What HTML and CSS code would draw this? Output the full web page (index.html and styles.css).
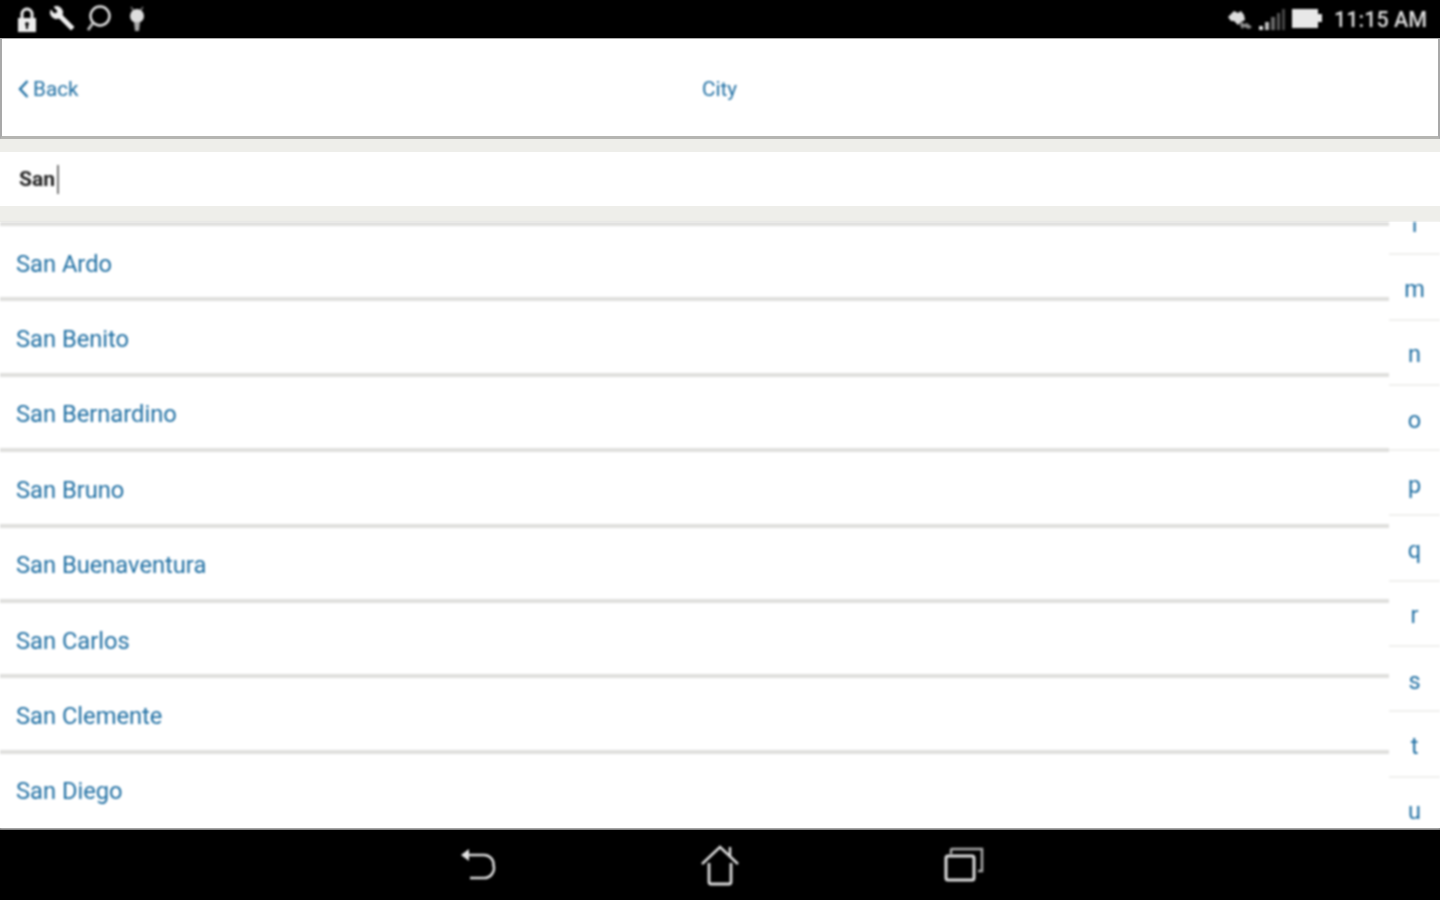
FILE: index.html
```html
<!DOCTYPE html>
<html lang="en">
<head>
    <meta charset="UTF-8">
    <meta name="viewport" content="width=device-width, initial-scale=1.0">
    <title>City</title>
    <link rel="stylesheet" href="styles.css">
</head>
<body>
    <div class="status-bar">
        <div class="status-icons">
            <svg class="icon" width="24" height="28" viewBox="0 0 24 28">
                <path d="M7 13V9a5 5 0 0 1 10 0v4" fill="none" stroke="#eee" stroke-width="3"/>
                <path d="M3 13h18v14H3z M12 17a2 2 0 0 0-1 3.700V24h2v-3.300A2 2 0 0 0 12 17z" fill="#eee" fill-rule="evenodd"/>
            </svg>
            <svg class="icon" width="28" height="28" viewBox="0 0 28 28">
                <path d="M3 5a6 6 0 0 0 8 8l12 12 3-3-12-12A6 6 0 0 0 6 2l4 4-2 3-3-1z" fill="#eee" stroke="#eee"/>
            </svg>
            <svg class="icon" width="28" height="30" viewBox="0 0 28 30">
                <circle cx="15" cy="12" r="9.500" fill="none" stroke="#e4e4e4" stroke-width="2.500"/>
                <path d="M8 19l-5 7" fill="none" stroke="#bbb" stroke-width="3"/>
            </svg>
            <svg class="icon robot" width="22" height="28" viewBox="0 0 20 28">
                <path d="M4 2l3 4M16 2l-3 4" stroke="#777" stroke-width="1.500"/>
                <circle cx="10" cy="11" r="7" fill="#ddd"/>
                <path d="M7 17h6l-1 9H8z" fill="#aaa"/>
            </svg>
        </div>
        <div class="status-right">
            <svg width="26" height="24" viewBox="0 0 26 24">
                <path d="M1 10l6-6 4 2 3-2 3 4 1 5-4 2-3 3-4-4H4z" fill="#ddd"/>
                <path d="M14 14l3 3 3-1 5 4-3 2-5-2-2 2-2-4z" fill="#8a8a8a"/>
            </svg>
            <svg width="29" height="24" viewBox="0 0 29 24">
                <path d="M1 19h4v4H1z" fill="#ddd"/>
                <path d="M7 15h4v8H7z" fill="#bbb"/>
                <path d="M13 10h4v13h-4z" fill="#666"/>
                <path d="M19 6h3v17h-3z" fill="#555"/>
                <path d="M24 2h3v21h-3z" fill="#444"/>
            </svg>
            <svg width="31" height="24" viewBox="0 0 31 24">
                <path d="M0 2h26v5h4v8h-4v6H0z" fill="#e8e8e8"/>
            </svg>
            <span class="clock">11:15 AM</span>
        </div>
    </div>

    <div class="title-bar">
        <a class="back-link">
            <svg width="13" height="20" viewBox="0 0 13 20">
                <path d="M10.500 2L3 10l7.500 8" fill="none" stroke="#1f6fa3" stroke-width="2.400"/>
            </svg>
            <span>Back</span>
        </a>
        <span class="title">City</span>
    </div>

    <div class="search-band">
        <div class="search-box"><span>San</span><i class="caret"></i></div>
    </div>

    <div class="content">
        <ul class="city-list">
            <li>San Ardo</li>
            <li>San Benito</li>
            <li>San Bernardino</li>
            <li>San Bruno</li>
            <li>San Buenaventura</li>
            <li>San Carlos</li>
            <li>San Clemente</li>
            <li>San Diego</li>
        </ul>
        <ul class="alpha-index">
            <li>l</li>
            <li>m</li>
            <li>n</li>
            <li>o</li>
            <li>p</li>
            <li>q</li>
            <li>r</li>
            <li>s</li>
            <li>t</li>
            <li>u</li>
        </ul>
    </div>

    <div class="nav-bar">
        <svg class="nav-back" width="40" height="38" viewBox="0 0 40 38">
            <path d="M3 9l8-6v12z" fill="#e6e6e6"/>
            <path d="M9 9h17a9.500 9.500 0 0 1 9.500 10 10 10 0 0 1-10 13H12" fill="none" stroke="#ddd" stroke-width="2.600"/>
        </svg>
        <svg width="40" height="42" viewBox="0 0 40 42">
            <path d="M2 20L20 3l18 17M30 3v9" fill="none" stroke="#ddd" stroke-width="2.500"/>
            <path d="M9 19v19a2 2 0 0 0 2 2h18a2 2 0 0 0 2-2V19" fill="none" stroke="#ddd" stroke-width="2.800"/>
        </svg>
        <svg width="40" height="36" viewBox="0 0 40 36">
            <path d="M7 7V3a1 1 0 0 1 1-1h30v22h-4" fill="none" stroke="#aaa" stroke-width="2.500"/>
            <rect x="2" y="9" width="28" height="24" rx="2" fill="none" stroke="#ddd" stroke-width="3"/>
        </svg>
    </div>
</body>
</html>
```

FILE: styles.css
```css
* {
    box-sizing: border-box;
    margin: 0;
    padding: 0;
}
body {
    width: 1440px;
    height: 900px;
    overflow: hidden;
    display: flex;
    flex-direction: column;
    font-family: 'Roboto', sans-serif;
    background-color: #fff;
}
ul {
    list-style-type: none;
}
svg {
    display: block;
}
/* reference is an upscaled capture, everything is a little soft */
.status-icons, .status-right, .back-link, .title, .search-box span, .caret, .content, .nav-bar svg {
    filter: blur(0.8px);
}
.status-bar {
    height: 38px;
    background-color: #000;
    display: flex;
    align-items: center;
    justify-content: space-between;
    padding: 0 13px 0 15px;
}
.status-icons {
    display: flex;
    align-items: center;
    gap: 9px;
}
.robot {
    margin-left: 4px;
}
.status-right {
    display: flex;
    align-items: center;
    gap: 5px;
}
.clock {
    margin-left: 6px;
    color: #ddd;
    font-size: 21.500px;
    font-weight: 500;
}
.title-bar {
    height: 101px;
    display: flex;
    align-items: center;
    background-color: #fff;
    border: 2px solid #a9a9a9;
    border-top-width: 1px;
    border-bottom: 3px solid #b5b5b2;
    color: #1f6fa3;
    font-size: 20.700px;
    padding: 2px 0 0 15px;
}
.back-link {
    width: 685px;
    display: flex;
    align-items: center;
    gap: 3px;
}
.search-band {
    height: 83px;
    padding: 13px 0 16px;
    background-color: #eeeeea;
}
.search-box {
    height: 54px;
    display: flex;
    align-items: center;
    padding-left: 19px;
    background-color: #fff;
    color: #222;
    font-size: 21px;
    font-weight: 700;
}
.caret {
    width: 2px;
    height: 29px;
    margin-left: 2px;
    background-color: #777;
}
.content {
    height: 606px;
    display: flex;
    overflow: hidden;
    background-color: #fff;
}
.city-list {
    flex: 1;
}
.city-list li {
    height: 75.400px;
    display: flex;
    align-items: center;
    padding: 4px 0 0 16px;
    border-top: 4px solid #dfdfdd;
    color: #1f6fa3;
    font-size: 23.700px;
}
.alpha-index {
    width: 51px;
    margin-top: -32px;
}
.alpha-index li {
    height: 65.300px;
    display: flex;
    align-items: center;
    justify-content: center;
    padding-top: 4px;
    border-bottom: 2px solid #f0f0ee;
    color: #1f6fa3;
    font-size: 23.500px;
}
.nav-bar {
    flex: 1;
    background-color: #000;
    border-top: 2px solid #777;
    display: flex;
    align-items: center;
    justify-content: center;
    gap: 204px;
}
.nav-back {
    margin-left: 2px;
    margin-right: -2px;
}
```
